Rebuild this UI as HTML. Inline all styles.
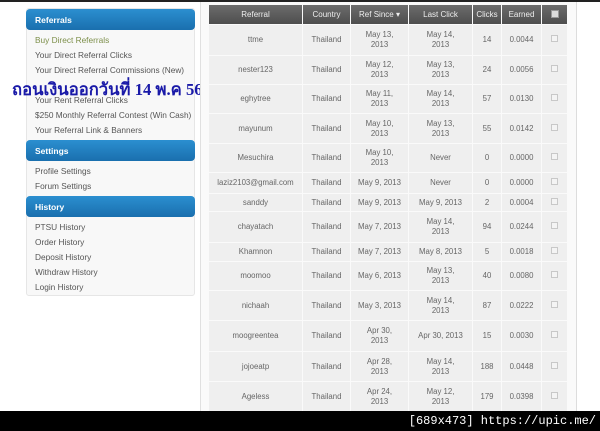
<!DOCTYPE html>
<html><head><meta charset="utf-8"><style>
*{margin:0;padding:0;box-sizing:border-box}
body{width:600px;height:431px;background:#fff;position:relative;overflow:hidden;font-family:"Liberation Sans",sans-serif}
.topbar{position:absolute;left:0;top:0;width:600px;height:2px;background:#222}
.side{position:absolute;left:26px;top:8px;width:169px;height:288px;background:#f8f8f8;border:1px solid #e6e6e6;border-radius:3px}
.hd{position:absolute;left:26px;width:169px;height:21px;background:linear-gradient(#2b8fd0,#1a6fae);border-radius:4px;color:#fff;font-size:8.5px;font-weight:bold;padding:6px 0 0 9px}
.lk{position:absolute;left:35px;font-size:8.3px;color:#555;white-space:nowrap}
.thai{position:absolute;left:12px;top:76px;font-family:"Liberation Serif","Noto Serif CJK SC",serif;font-size:17px;font-weight:bold;color:#1a1aa8;white-space:nowrap;transform-origin:0 0;transform:scaleX(0.98)}
.panel{position:absolute;left:200px;top:2px;width:377px;height:409px;background:#fafafa;border-left:1px solid #e0e0e0;border-right:1px solid #ddd}
table{position:absolute;left:208px;top:4px;border-collapse:separate;border-spacing:1px;font-size:7.8px;color:#666;text-align:center}
td{background:#efefef;line-height:10px}
th{background:linear-gradient(#6c6c6c,#4e4e4e);color:#eee;font-weight:normal;height:19px;font-size:8px}
.cb{display:inline-block;width:7px;height:7px;border:1px solid #c8c8c8;background:#f4f4f4}
.hcb{display:inline-block;width:8px;height:8px;background:#ddd;border:1px solid #999}
.bot{position:absolute;left:0;top:411px;width:600px;height:20px;background:#000;color:#fff;font-family:"Liberation Mono",monospace;font-size:12px;text-align:right;padding:3px 4px 0 0}
</style></head><body>
<div class="topbar"></div>
<div class="side"></div>
<div class="hd" style="top:9px">Referrals</div>
<div class="lk" style="top:35px;color:#7d8f4a">Buy Direct Referrals</div>
<div class="lk" style="top:50px">Your Direct Referral Clicks</div>
<div class="lk" style="top:65px">Your Direct Referral Commissions (New)</div>
<div class="lk" style="top:95px">Your Rent Referral Clicks</div>
<div class="lk" style="top:110px">$250 Monthly Referral Contest (Win Cash)</div>
<div class="lk" style="top:125px">Your Referral Link &amp; Banners</div>
<div class="hd" style="top:140px">Settings</div>
<div class="lk" style="top:166px">Profile Settings</div>
<div class="lk" style="top:181px">Forum Settings</div>
<div class="hd" style="top:196px">History</div>
<div class="lk" style="top:222px">PTSU History</div>
<div class="lk" style="top:237px">Order History</div>
<div class="lk" style="top:252px">Deposit History</div>
<div class="lk" style="top:267px">Withdraw History</div>
<div class="lk" style="top:282px">Login History</div>
<div class="thai">ถอนเงินออกวันที่ 14 พ.ค 56</div>
<div class="panel"></div>
<table>
<tr><th style="width:93px">Referral</th><th style="width:47px">Country</th><th style="width:57px">Ref Since ▾</th><th style="width:63px">Last Click</th><th style="width:28px">Clicks</th><th style="width:39px">Earned</th><th style="width:25px"><span class="hcb"></span></th></tr>
<tr style="height:30px"><td>ttme</td><td>Thailand</td><td>May 13,<br>2013</td><td>May 14,<br>2013</td><td>14</td><td>0.0044</td><td><span class="cb"></span></td></tr>
<tr style="height:28px"><td>nester123</td><td>Thailand</td><td>May 12,<br>2013</td><td>May 13,<br>2013</td><td>24</td><td>0.0056</td><td><span class="cb"></span></td></tr>
<tr style="height:28px"><td>eghytree</td><td>Thailand</td><td>May 11,<br>2013</td><td>May 14,<br>2013</td><td>57</td><td>0.0130</td><td><span class="cb"></span></td></tr>
<tr style="height:29px"><td>mayunum</td><td>Thailand</td><td>May 10,<br>2013</td><td>May 13,<br>2013</td><td>55</td><td>0.0142</td><td><span class="cb"></span></td></tr>
<tr style="height:28px"><td>Mesuchira</td><td>Thailand</td><td>May 10,<br>2013</td><td>Never</td><td>0</td><td>0.0000</td><td><span class="cb"></span></td></tr>
<tr style="height:20px"><td>laziz2103@gmail.com</td><td>Thailand</td><td>May 9, 2013</td><td>Never</td><td>0</td><td>0.0000</td><td><span class="cb"></span></td></tr>
<tr style="height:17px"><td>sanddy</td><td>Thailand</td><td>May 9, 2013</td><td>May 9, 2013</td><td>2</td><td>0.0004</td><td><span class="cb"></span></td></tr>
<tr style="height:30px"><td>chayatach</td><td>Thailand</td><td>May 7, 2013</td><td>May 14,<br>2013</td><td>94</td><td>0.0244</td><td><span class="cb"></span></td></tr>
<tr style="height:18px"><td>Khamnon</td><td>Thailand</td><td>May 7, 2013</td><td>May 8, 2013</td><td>5</td><td>0.0018</td><td><span class="cb"></span></td></tr>
<tr style="height:28px"><td>moomoo</td><td>Thailand</td><td>May 6, 2013</td><td>May 13,<br>2013</td><td>40</td><td>0.0080</td><td><span class="cb"></span></td></tr>
<tr style="height:29px"><td>nichaah</td><td>Thailand</td><td>May 3, 2013</td><td>May 14,<br>2013</td><td>87</td><td>0.0222</td><td><span class="cb"></span></td></tr>
<tr style="height:30px"><td>moogreentea</td><td>Thailand</td><td>Apr 30,<br>2013</td><td>Apr 30, 2013</td><td>15</td><td>0.0030</td><td><span class="cb"></span></td></tr>
<tr style="height:29px"><td>jojoeatp</td><td>Thailand</td><td>Apr 28,<br>2013</td><td>May 14,<br>2013</td><td>188</td><td>0.0448</td><td><span class="cb"></span></td></tr>
<tr style="height:30px"><td>Ageless</td><td>Thailand</td><td>Apr 24,<br>2013</td><td>May 12,<br>2013</td><td>179</td><td>0.0398</td><td><span class="cb"></span></td></tr>
</table>
<div class="bot">[689x473] https://upic.me/</div>
</body></html>
